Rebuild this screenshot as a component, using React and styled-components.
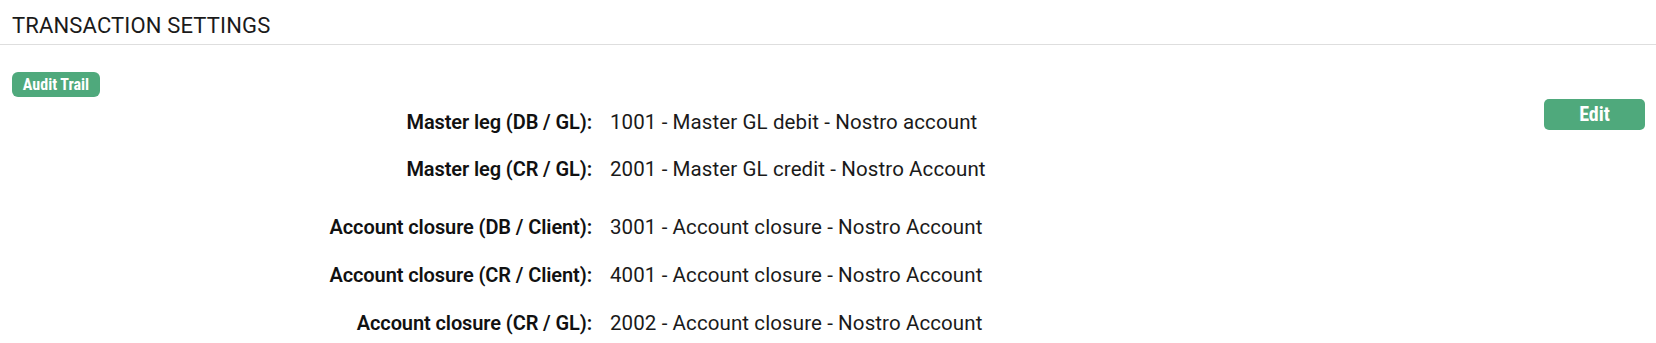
import React from "react";
import styled, { createGlobalStyle } from "styled-components";

const Global = createGlobalStyle`
  html, body { margin: 0; padding: 0; background: #fff; }
  body { font-family: "Roboto", "Liberation Sans", sans-serif; color: #1a1a1a; }
`;

const Page = styled.div`
  width: 1656px;
  height: 343px;
  overflow: hidden;
`;

const Header = styled.header`
  padding: 13px 12px 5px;
  border-bottom: 1px solid #dedede;
`;

const Title = styled.h1`
  margin: 0;
  font-family: "Roboto", "Liberation Sans", sans-serif;
  font-weight: 400;
  font-size: 22px;
  line-height: 26px;
  letter-spacing: 0.15px;
  color: #1a1a1a;
`;

const Body = styled.section`
  padding: 27px 11px 0 12px;
`;

const Pill = styled.button`
  border: 0;
  margin: 0;
  padding: 0;
  background: #4fa97c;
  color: #fff;
  font-family: "Roboto Condensed", "Roboto", sans-serif;
  font-weight: 700;
  cursor: pointer;
  width: ${(p) => p.$w}px;
  height: ${(p) => p.$h}px;
  border-radius: ${(p) => p.$r}px;
  font-size: ${(p) => p.$fs}px;
  line-height: ${(p) => p.$h}px;
  display: block;
`;

const Content = styled.div`
  display: flex;
  align-items: flex-start;
  justify-content: space-between;
`;

const List = styled.div`
  display: flex;
  flex-direction: column;
  gap: 11px;
  margin-top: 1px;
`;

const Group = styled.dl`
  margin: 0;
  display: grid;
  grid-template-columns: 580px auto;
  column-gap: 18px;
  grid-auto-rows: ${(p) => p.$row}px;
  align-items: center;
`;

const Label = styled.dt`
  text-align: right;
  font-weight: 600;
  font-size: 20px;
  letter-spacing: -0.1px;
  color: #111;
  white-space: nowrap;
`;

const Value = styled.dd`
  margin: 0;
  font-weight: 400;
  font-size: 20.5px;
  letter-spacing: 0.1px;
  color: #1a1a1a;
  white-space: nowrap;
`;

const EditWrap = styled.div`
  padding-top: 2px;
`;

const groups = [
  {
    row: 47,
    items: [
      ["Master leg (DB / GL):", "1001 - Master GL debit - Nostro account"],
      ["Master leg (CR / GL):", "2001 - Master GL credit - Nostro Account"],
    ],
  },
  {
    row: 48,
    items: [
      ["Account closure (DB / Client):", "3001 - Account closure - Nostro Account"],
      ["Account closure (CR / Client):", "4001 - Account closure - Nostro Account"],
      ["Account closure (CR / GL):", "2002 - Account closure - Nostro Account"],
    ],
  },
];

export default function App() {
  return (
    <Page>
      <Global />
      <Header>
        <Title>TRANSACTION SETTINGS</Title>
      </Header>
      <Body>
        <Pill $w={88} $h={25} $r={6} $fs={16}>Audit Trail</Pill>
        <Content>
          <List>
            {groups.map((g, i) => (
              <Group key={i} $row={g.row}>
                {g.items.map(([l, v]) => (
                  <React.Fragment key={l}>
                    <Label>{l}</Label>
                    <Value>{v}</Value>
                  </React.Fragment>
                ))}
              </Group>
            ))}
          </List>
          <EditWrap>
            <Pill $w={101} $h={31} $r={5} $fs={20}>Edit</Pill>
          </EditWrap>
        </Content>
      </Body>
    </Page>
  );
}
